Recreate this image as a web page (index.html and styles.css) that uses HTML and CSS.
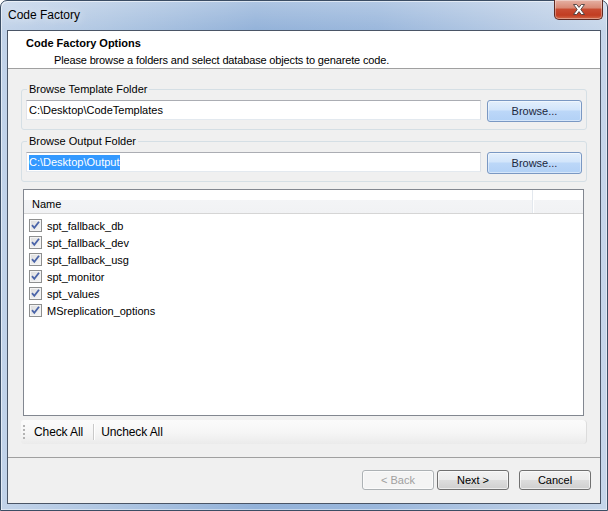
FILE: index.html
```html
<!DOCTYPE html>
<html lang="en">
<head>
  <meta charset="UTF-8"/>
  <title>Code Factory</title>
  <link rel="stylesheet" href="styles.css">
</head>
<body>

  <div class="window">
    <div class="titlebar">
      <span class="caption">Code Factory</span>
      <button class="close-btn" aria-label="Close">
        <svg viewBox="0 0 14 11" width="14" height="11">
          <path d="M1.5 .5h3.2L7 3.4 9.3.5h3.2L8.8 5.5l3.7 5H9.3L7 7.6 4.7 10.5H1.5l3.7-5z"/>
        </svg>
      </button>
    </div>

    <div class="client">
      <div class="header">
        <h1>Code Factory Options</h1>
        <p>Please browse a folders and select database objects to genarete code.</p>
      </div>

      <div class="content">
        <fieldset class="group">
          <legend>Browse Template Folder</legend>
          <div class="path-row">
            <div class="path">C:\Desktop\CodeTemplates</div>
            <button class="browse-btn">Browse...</button>
          </div>
        </fieldset>

        <fieldset class="group">
          <legend>Browse Output Folder</legend>
          <div class="path-row">
            <div class="path"><span class="selected">C:\Desktop\Output</span></div>
            <button class="browse-btn">Browse...</button>
          </div>
        </fieldset>

        <div class="list">
          <div class="list-head">
            <span class="col-name">Name</span>
            <span class="col-rest"></span>
          </div>
          <ul class="items">
            <li><span class="check"></span>spt_fallback_db</li>
            <li><span class="check"></span>spt_fallback_dev</li>
            <li><span class="check"></span>spt_fallback_usg</li>
            <li><span class="check"></span>spt_monitor</li>
            <li><span class="check"></span>spt_values</li>
            <li><span class="check"></span>MSreplication_options</li>
          </ul>
        </div>

        <div class="toolstrip">
          <span class="grip"></span>
          <span class="tool">Check All</span>
          <span class="tool-sep"></span>
          <span class="tool">Uncheck All</span>
        </div>
      </div>

      <div class="footer">
        <button class="btn" disabled>&lt; Back</button>
        <button class="btn">Next &gt;</button>
        <button class="btn cancel">Cancel</button>
      </div>
    </div>
  </div>

</body>
</html>
```

FILE: styles.css
```css
:root {
  --face:     #f0f0f0;
  --frame:    #3b4d64;
  --line:     #a0a0a0;
  --group:    #d5dfe5;
  --text:     #000000;
}
*,*::before,*::after { box-sizing:border-box; margin:0; padding:0 }
body {
  width: 608px;
  height: 511px;
  overflow: hidden;
  background: #ffffff;
  font-family: "Liberation Sans", Arial, sans-serif;
  font-size: 11px;
  color: var(--text);
}
.window {
  width: 608px;
  height: 511px;
  display: flex;
  flex-direction: column;
  padding: 0 6px 6px 6px;
  border: 1px solid var(--frame);
  border-radius: 7px 7px 0 0;
  background:
    linear-gradient(180deg, rgba(255,255,255,.25), rgba(255,255,255,0) 30px),
    linear-gradient(90deg, #c2d3e9 0%, #afc6e2 18%, #93b2d9 42%, #9ab7dc 62%, #b6cae4 85%, #c6d6ea 100%);
  box-shadow: inset 1px 1px 0 rgba(255,255,255,.55), inset -1px -1px 0 rgba(255,255,255,.45);
}

/* title bar */
.titlebar {
  height: 29px;
  display: flex;
  align-items: flex-start;
}
.caption {
  padding: 7px 0 0 1px;
  font-size: 12px;
  color: #000;
  text-shadow: 0 0 8px rgba(255,255,255,.9);
}
.close-btn {
  margin-left: auto;
  margin-right: -2px;
  margin-top: -1px;
  width: 49px; height: 20px;
  border: 1px solid #5f2a22;
  border-top: none;
  border-radius: 0 0 5px 5px;
  background: linear-gradient(180deg, #e5b1a4 0%, #d98a76 40%, #c84b31 50%, #c23d22 80%, #d36a4a 100%);
  box-shadow: inset 0 0 0 1px rgba(255,255,255,.35);
  display: flex; justify-content: center; align-items: center;
}
.close-btn svg {
  fill: #ffffff;
  stroke: #4a3d3d;
  stroke-width: .9;
}

/* client area */
.client {
  flex: 1;
  display: flex;
  flex-direction: column;
  background: var(--face);
  border: 1px solid #4a5566;
}
.header {
  background: #ffffff;
  border-bottom: 1px solid var(--line);
  padding: 5px 0 1px 18px;
}
.header h1 {
  font-size: 11px;
  font-weight: 700;
  line-height: 14px;
}
.header p {
  margin: 3px 0 0 28px;
  line-height: 14px;
  letter-spacing: -0.15px;
}

.content {
  flex: 1;
  padding: 13px 13px 0 13px;
}
.group {
  border: 1px solid var(--group);
  border-radius: 3px;
  padding: 4px 4px 7px 4px;
  margin-bottom: 4px;
}
.group legend {
  margin-left: 1px;
  padding: 0 2px;
  line-height: 14px;
}
.path-row {
  display: flex;
  align-items: flex-start;
  gap: 6px;
}
.path {
  flex: 1;
  height: 20px;
  padding: 0 2px;
  line-height: 18px;
  background: #ffffff;
  border: 1px solid #abadb3;
  border-color: #abadb3 #dbdfe6 #e3e9ef #e2e3ea;
  white-space: nowrap;
}
.selected {
  background: #3399ff;
  color: #ffffff;
  padding: 1px 0 2px;
}
.browse-btn {
  width: 95px; height: 22px;
  font: inherit;
  color: #1c2740;
  border: 1px solid #7a98c3;
  border-radius: 3px;
  background: linear-gradient(180deg, #e3effc 0%, #d2e5fb 45%, #bcd7f8 50%, #b2d1f6 100%);
  box-shadow: inset 0 0 0 1px rgba(255,255,255,.45);
}

/* list view */
.list {
  height: 227px;
  margin: 7px 3px 0 2px;
  background: #ffffff;
  border: 1px solid #828790;
}
.list-head {
  display: flex;
  height: 24px;
  border-bottom: 1px solid #d5d5d5;
  background: linear-gradient(180deg, #ffffff 0%, #ffffff 42%, #f3f4f6 45%, #f1f2f4 100%);
}
.col-name {
  width: 509px;
  padding: 8px 0 0 8px;
  border-right: 1px solid #e3e8ee;
}
.col-rest {
  flex: 1;
  border-left: 1px solid #ffffff;
}
.items {
  list-style: none;
  padding: 3px 0 0 5px;
}
.items li {
  display: flex;
  align-items: center;
  gap: 5px;
  height: 17px;
}
.check {
  width: 13px; height: 13px;
  border: 1px solid #8e8f8f;
  background:
    url("data:image/svg+xml,%3Csvg xmlns='http://www.w3.org/2000/svg' viewBox='0 0 11 11'%3E%3Cpath d='M2 5.2l2.3 2.6L9 1.8' fill='none' stroke='%234a64a8' stroke-width='1.8'/%3E%3C/svg%3E") center/11px 11px no-repeat,
    linear-gradient(135deg, #dcdcdc, #f7f7f7);
  box-shadow: inset 0 0 0 1px #f4f4f4;
}

/* tool strip */
.toolstrip {
  display: flex;
  align-items: center;
  height: 24px;
  margin-top: 4px;
  padding-left: 2px;
  border-right: 1px solid #dcdcdc;
  border-radius: 3px 4px 4px 3px;
  background: linear-gradient(180deg, #fbfbfb 0%, #f6f6f6 50%, #ebebeb 100%);
}
.grip {
  width: 2px; height: 14px;
  background: repeating-linear-gradient(180deg, #b3b3b3 0 2px, transparent 2px 4px);
  margin-right: 9px;
}
.tool {
  font-size: 12px;
  letter-spacing: -0.1px;
}
.tool-sep {
  width: 2px; height: 16px;
  margin: 0 6px 0 10px;
  border-left: 1px solid #c9c9c9;
  border-right: 1px solid #ffffff;
}

/* wizard buttons */
.footer {
  height: 46px;
  border-top: 1px solid var(--line);
  display: flex;
  justify-content: flex-end;
  align-items: flex-start;
  gap: 3px;
  padding: 12px 9px 0 0;
}
.btn {
  width: 72px; height: 20px;
  font: inherit;
  color: #000;
  border: 1px solid #707070;
  border-radius: 3px;
  background: linear-gradient(180deg, #f2f2f2 0%, #ebebeb 50%, #dddddd 51%, #cfcfcf 100%);
  box-shadow: inset 0 0 0 1px rgba(255,255,255,.6);
}
.btn:disabled {
  color: #a0a0a0;
  border-color: #adb2b5;
  background: #f4f4f4;
}
.btn.cancel {
  margin-left: 7px;
}
```
